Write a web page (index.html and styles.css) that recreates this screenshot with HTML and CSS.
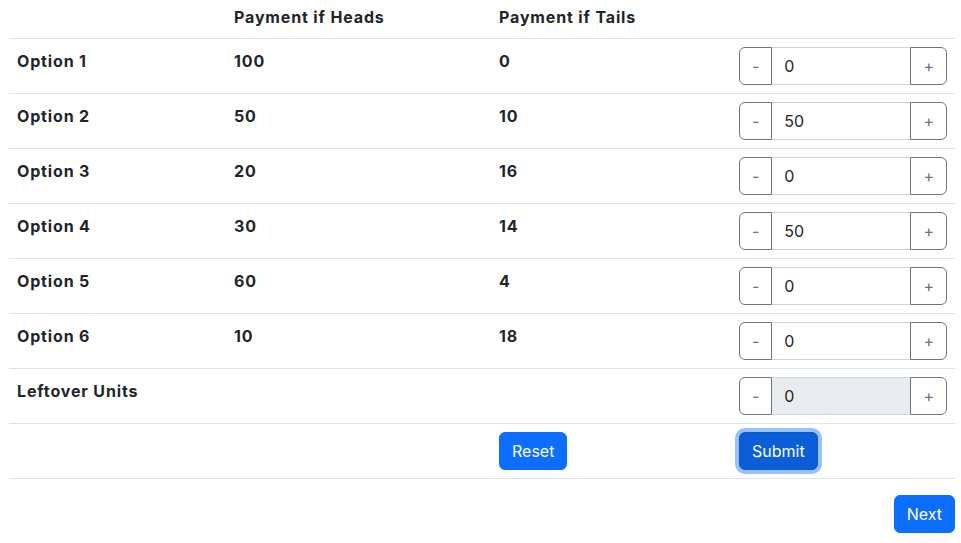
FILE: index.html
```html
<!DOCTYPE html>
<html>
<head>
<meta charset="utf-8">
<link rel="stylesheet" href="styles.css">
</head>
<body>
<div class="page">
  <table class="alloc">
    <thead>
      <tr>
        <th class="c1"></th>
        <th class="c2">Payment if Heads</th>
        <th class="c3">Payment if Tails</th>
        <th class="c4"></th>
      </tr>
    </thead>
    <tbody>
      <tr><th>Option 1</th><th>100</th><th>0</th><td><div class="ig"><button class="ob">-</button><input class="fc" value="0"><button class="ob">+</button></div></td></tr>
      <tr><th>Option 2</th><th>50</th><th>10</th><td><div class="ig"><button class="ob">-</button><input class="fc" value="50"><button class="ob">+</button></div></td></tr>
      <tr><th>Option 3</th><th>20</th><th>16</th><td><div class="ig"><button class="ob">-</button><input class="fc" value="0"><button class="ob">+</button></div></td></tr>
      <tr><th>Option 4</th><th>30</th><th>14</th><td><div class="ig"><button class="ob">-</button><input class="fc" value="50"><button class="ob">+</button></div></td></tr>
      <tr><th>Option 5</th><th>60</th><th>4</th><td><div class="ig"><button class="ob">-</button><input class="fc" value="0"><button class="ob">+</button></div></td></tr>
      <tr><th>Option 6</th><th>10</th><th>18</th><td><div class="ig"><button class="ob">-</button><input class="fc" value="0"><button class="ob">+</button></div></td></tr>
      <tr><th>Leftover Units</th><th></th><th></th><td><div class="ig"><button class="ob">-</button><input class="fc dis" value="0" disabled><button class="ob">+</button></div></td></tr>
      <tr><td></td><td></td><td><button class="btn">Reset</button></td><td><button class="btn focus">Submit</button></td></tr>
    </tbody>
  </table>
  <div class="footer">
    <button class="btn">Next</button>
  </div>
</div>
</body>
</html>
```
FILE: styles.css
```css
* { box-sizing: border-box; }
body {
  margin: 0;
  font-family: Inter, "Liberation Sans", Arial, sans-serif;
  font-size: 16px;
  line-height: 1.5;
  color: #212529;
  background: #fff;
}
.page {
  padding: 0 6px 0 9px;
}
.alloc {
  width: 100%;
  border-collapse: collapse;
  margin-top: -2px;
  table-layout: fixed;
}
.alloc th, .alloc td {
  padding: 8px;
  text-align: left;
  vertical-align: top;
  border-bottom: 1px solid #dee2e6;
}
.alloc th {
  font-weight: 700;
  letter-spacing: 0.85px;
}
.alloc thead th {
  padding-top: 7px;
  padding-bottom: 9px;
}
.alloc tbody th {
  padding-top: 10px;
  padding-bottom: 6px;
}
.c1 { width: 217px; }
.c2 { width: 265px; }
.c3 { width: 240px; }
.c4 { width: 224px; }
.ig {
  display: flex;
  width: 100%;
}
.ob {
  font: inherit;
  font-weight: 400;
  line-height: 1.5;
  color: #6c757d;
  background: #fff;
  border: 1px solid #6c757d;
  padding: 6px 12px;
  height: 38px;
  cursor: pointer;
}
.ig .ob:first-child { border-radius: 6px 0 0 6px; }
.ig .ob:last-child { border-radius: 0 6px 6px 0; }
.fc {
  flex: 1;
  min-width: 0;
  font: inherit;
  font-weight: 400;
  color: #212529;
  background: #fff;
  border: 1px solid #ced4da;
  border-left: none;
  border-right: none;
  padding: 6px 12px;
  height: 38px;
}
.fc.dis { background: #e9ecef; opacity: 1; }
.btn {
  font: inherit;
  font-weight: 400;
  color: #fff;
  background: #0d6efd;
  border: 1px solid #0d6efd;
  border-radius: 6px;
  padding: 6px 12px;
  line-height: 1.5;
  height: 38px;
}
.btn.focus {
  background: #0b5ed7;
  border-color: #0a58ca;
  box-shadow: 0 0 0 4px rgba(49, 132, 253, 0.5);
}
.footer {
  display: flex;
  justify-content: flex-end;
  padding-top: 16px;
}
```
